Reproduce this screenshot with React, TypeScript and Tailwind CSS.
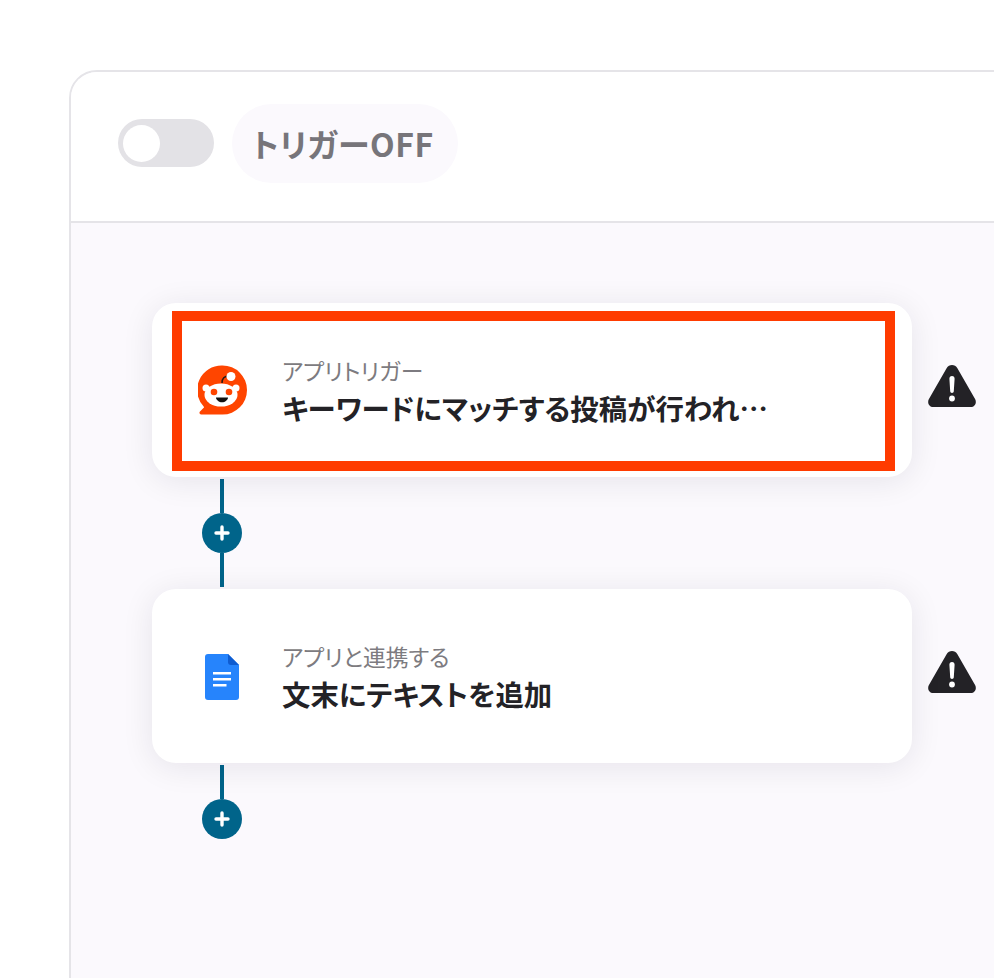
const font = '[font-family:"Noto_Sans_CJK_JP","Noto_Sans",sans-serif]'

function RedditIcon() {
  return (
    <svg width="50" height="50" viewBox="0 0 50 50">
      <path d="M24.5 0.5a24.5 24.5 0 1 1 0 49H3.2c-1.6 0-2.3-1.8-1.2-2.9l4.2-4.4A24.5 24.5 0 0 1 24.5 0.5z" fill="#ff4500" />
      <circle cx="8" cy="23" r="3.500" fill="#fff" />
      <circle cx="38" cy="23" r="3.500" fill="#fff" />
      <ellipse cx="23" cy="30" rx="16.500" ry="11.500" fill="#fff" />
      <path d="M24 18c0-4 2-7 7-7" fill="none" stroke="#2a1a14" strokeWidth="1.500" />
      <circle cx="33" cy="11.500" r="4.500" fill="#fff" />
      <circle cx="16" cy="27" r="3.300" fill="#ff4500" />
      <circle cx="31" cy="27" r="3.300" fill="#ff4500" />
      <path d="M18 32.500h12c0 2.500-3 4.800-6 4.800s-6-2.300-6-4.800z" fill="#111" />
    </svg>
  )
}

function DocsIcon() {
  return (
    <svg width="34" height="46" viewBox="0 0 34 46" className="mr-[2px] mt-[2px]">
      <path d="M3 0h20l11 11v32a3 3 0 0 1-3 3H3a3 3 0 0 1-3-3V3a3 3 0 0 1 3-3z" fill="#2684fc" />
      <path d="M23 0l11 11H26a3 3 0 0 1-3-3z" fill="#0f5cd0" />
      <path d="M8 18h18v2.500H8zM8 24h18v2.500H8zM8 30h13.500v2.500H8z" fill="#fff" />
    </svg>
  )
}

function WarningIcon() {
  return (
    <svg width="48" height="42" viewBox="0 0 48 42" className="shrink-0 mb-[9px]">
      <path d="M18.600 3.200C21-1 27-1 29.400 3.200l17.800 31.100C49 37.900 46.700 42 42.800 42H5.200C1.300 42-1 37.900.8 34.300z" fill="#232226" />
      <path d="M24 11c-1.700 0-2.700 1.200-2.600 2.800l.8 12.400c.1 1 .8 1.700 1.800 1.700s1.700-.7 1.800-1.700l.8-12.400c.1-1.600-.9-2.800-2.600-2.800z" fill="#fff" />
      <circle cx="24" cy="33.500" r="2.900" fill="#fff" />
    </svg>
  )
}

function PlusButton() {
  return (
    <div className="w-10 h-10 rounded-full bg-[#00648a] flex items-center justify-center shrink-0">
      <svg width="16" height="16" viewBox="0 0 16 16">
        <path d="M8 2v12M2 8h12" stroke="#fff" strokeWidth="3.400" strokeLinecap="round" />
      </svg>
    </div>
  )
}

function StepCard({ icon, label, title, highlighted }: { icon: React.ReactNode; label: string; title: string; highlighted?: boolean }) {
  return (
    <div className="flex items-center gap-4">
      <div className="relative w-[760px] h-[174px] bg-white rounded-[24px] shadow-[0_4px_32px_rgba(20,10,40,0.09)] flex items-center shrink-0">
        <div className="w-[50px] ml-[46px] flex justify-center shrink-0">{icon}</div>
        <div className="ml-[34px] pt-[3px] flex flex-col">
          <span className="text-[22.8px] leading-[33px] text-[#7d7b80]">{label}</span>
          <span className="text-[28.4px] leading-[42px] font-bold text-[#232226]">{title}</span>
        </div>
        {highlighted && <div className="absolute left-5 top-2 w-[723px] h-[160px] border-[10px] border-[#ff3b00]" />}
      </div>
      <WarningIcon />
    </div>
  )
}

export default function App() {
  return (
    <div className={`h-[978px] w-[994px] overflow-hidden bg-white pt-[70px] pl-[69px] [font-feature-settings:"palt"] ${font}`}>
      <div className="w-[1100px] h-[1000px] border-2 border-[#e5e4e8] rounded-tl-[28px] bg-[#fbf9fd] overflow-hidden">
        <div className="h-[151px] bg-white border-b-2 border-[#e5e4e8] flex items-center pl-[47px] pb-[7px]">
          <div className="w-24 h-12 rounded-full bg-[#e3e2e6] flex items-center pl-[5px]">
            <div className="w-[37px] h-[37px] rounded-full bg-white" />
          </div>
          <div className="ml-[18px] w-[226px] h-[79px] rounded-[40px] bg-[#fbf9fd] flex items-center justify-center pr-[4px] text-[32px] tracking-[0.6px] font-bold text-[#77757a]">
            トリガーOFF
          </div>
        </div>

        <div className="pt-[80px] pl-[81px]">
          <StepCard icon={<RedditIcon />} label="アプリトリガー" title="キーワードにマッチする投稿が行われ…" highlighted />
          <div className="w-[40px] ml-[50px] h-[112px] flex flex-col items-center justify-between py-[2px]">
            <div className="w-1 flex-1 bg-[#00648a]" />
            <PlusButton />
            <div className="w-1 flex-1 bg-[#00648a]" />
          </div>
          <StepCard icon={<DocsIcon />} label="アプリと連携する" title="文末にテキストを追加" />
          <div className="w-[40px] ml-[50px] pt-[2px] flex flex-col items-center">
            <div className="w-1 h-[34px] bg-[#00648a]" />
            <PlusButton />
          </div>
        </div>
      </div>
    </div>
  )
}
